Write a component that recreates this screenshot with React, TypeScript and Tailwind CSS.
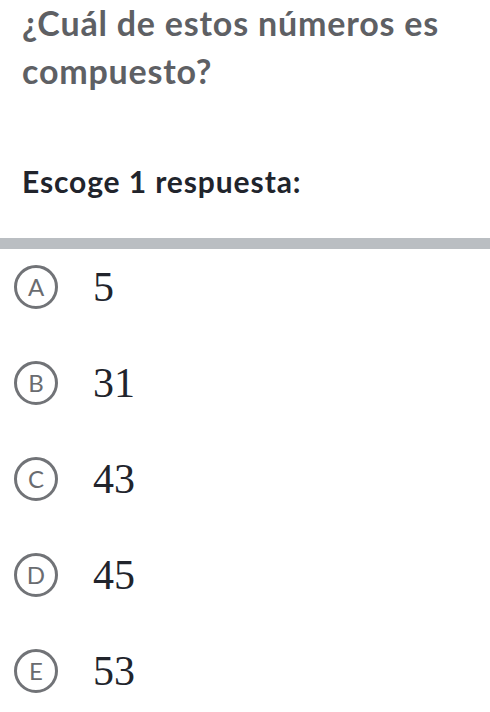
import React from 'react';

const choices = [
  { letter: 'A', value: '5' },
  { letter: 'B', value: '31' },
  { letter: 'C', value: '43' },
  { letter: 'D', value: '45' },
  { letter: 'E', value: '53' },
];

const App: React.FC = () => {
  return (
    <div className="w-[490px] h-[712px] overflow-hidden bg-white font-['Lato',sans-serif]">
      <div className="px-[22px]">
        <h1 className="-mt-px text-[34px] leading-[48px] tracking-[0.8px] font-bold text-[#5e6064]">
          ¿Cuál de estos números es compuesto?
        </h1>
        <h2 className="mt-[62px] text-[30px] leading-[48px] tracking-[0.9px] font-bold text-[#21242c]">
          Escoge 1 respuesta:
        </h2>
      </div>

      <div className="mt-[33px] h-[11px] w-full bg-[#babec2]" />

      <ul className="flex flex-col gap-[52px] pt-[16px]">
        {choices.map(c => (
          <li key={c.letter} className="flex items-center h-[44px] pl-[14px]">
            <span className="flex h-[44px] w-[44px] shrink-0 items-center justify-center rounded-full border-[3px] border-[#717377] text-[24px] text-[#6a6c70]">
              {c.letter}
            </span>
            <span className="ml-[35px] font-['Liberation_Serif',serif] text-[42px] leading-none text-[#21242c]">
              {c.value}
            </span>
          </li>
        ))}
      </ul>
    </div>
  );
};

export default App;
